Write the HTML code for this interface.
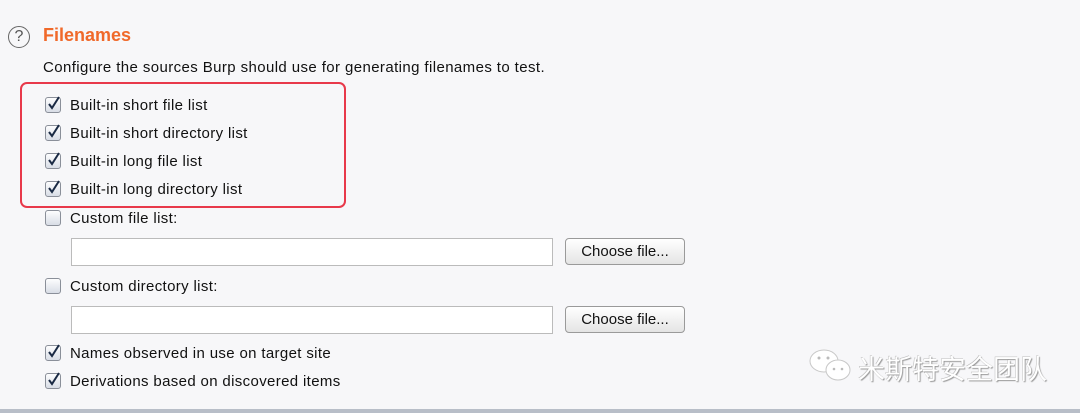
<!DOCTYPE html>
<html><head><style>
body{margin:0;width:1080px;height:413px;background:#f7f7f9;font-family:"Liberation Sans",sans-serif;position:relative;overflow:hidden;color:#111}
.a{position:absolute}
.t{font-size:15px;letter-spacing:0.35px;left:70px;line-height:18px;margin-top:1px}
.cb{position:absolute;left:45px;width:14px;height:14px;border:1px solid #8a8f99;border-radius:3px;background:linear-gradient(#fdfdfe,#d8dde6)}
.cb svg{position:absolute;left:1px;top:-2px}
.in{position:absolute;left:71px;width:480px;height:26px;border:1px solid #bbb;background:#fff}
.btn{position:absolute;left:565px;width:118px;height:25px;border:1px solid #9a9a9a;border-radius:4px;background:linear-gradient(#fff,#e4e4e4);font-size:15px;text-align:center;line-height:25px}
</style></head><body>
<div class="a" style="left:8px;top:26px;width:20px;height:20px;border:1.5px solid #666;border-radius:50%;text-align:center;font-size:16px;line-height:20px;color:#555">?</div>
<div class="a" style="left:43px;top:25px;font-size:18px;font-weight:bold;color:#f0692a">Filenames</div>
<div class="a" style="left:43px;top:59px;font-size:15px;letter-spacing:0.4px">Configure the sources Burp should use for generating filenames to test.</div>
<div class="a" style="left:20px;top:82px;width:322px;height:122px;border:2px solid #e8394a;border-radius:7px"></div>

<div class="cb" style="top:97px"><svg width="14" height="15"><path d="M2 8 L5 12 L12 1" stroke="#1a2a44" stroke-width="2" fill="none"/></svg></div><div class="a t" style="top:96px">Built-in short file list</div>
<div class="cb" style="top:125px"><svg width="14" height="15"><path d="M2 8 L5 12 L12 1" stroke="#1a2a44" stroke-width="2" fill="none"/></svg></div><div class="a t" style="top:124px">Built-in short directory list</div>
<div class="cb" style="top:153px"><svg width="14" height="15"><path d="M2 8 L5 12 L12 1" stroke="#1a2a44" stroke-width="2" fill="none"/></svg></div><div class="a t" style="top:152px">Built-in long file list</div>
<div class="cb" style="top:181px"><svg width="14" height="15"><path d="M2 8 L5 12 L12 1" stroke="#1a2a44" stroke-width="2" fill="none"/></svg></div><div class="a t" style="top:180px">Built-in long directory list</div>
<div class="cb" style="top:210px"></div><div class="a t" style="top:209px">Custom file list:</div>
<div class="in" style="top:238px"></div><div class="btn" style="top:238px">Choose file...</div>
<div class="cb" style="top:278px"></div><div class="a t" style="top:277px">Custom directory list:</div>
<div class="in" style="top:306px"></div><div class="btn" style="top:306px">Choose file...</div>
<div class="cb" style="top:345px"><svg width="14" height="15"><path d="M2 8 L5 12 L12 1" stroke="#1a2a44" stroke-width="2" fill="none"/></svg></div><div class="a t" style="top:344px">Names observed in use on target site</div>
<div class="cb" style="top:373px"><svg width="14" height="15"><path d="M2 8 L5 12 L12 1" stroke="#1a2a44" stroke-width="2" fill="none"/></svg></div><div class="a t" style="top:372px">Derivations based on discovered items</div>

<svg class="a" style="left:808px;top:348px" width="46" height="36"><ellipse cx="16" cy="13" rx="14" ry="11" fill="#fff" stroke="#c8c8c8"/><ellipse cx="30" cy="22" rx="12" ry="10" fill="#fff" stroke="#c8c8c8"/><circle cx="11" cy="10" r="1.5" fill="#bbb"/><circle cx="20" cy="10" r="1.5" fill="#bbb"/><circle cx="26" cy="21" r="1.3" fill="#bbb"/><circle cx="34" cy="21" r="1.3" fill="#bbb"/></svg>
<div class="a" style="left:858px;top:348px;font-size:27px;font-family:'Liberation Sans','Noto Sans CJK SC',sans-serif;color:#fff;text-shadow:1px 1px 1px #999,-0.5px -0.5px 0 #bbb">米斯特安全团队</div>
<div class="a" style="left:0;top:409px;width:1080px;height:4px;background:#b8bec8"></div>
</body></html>
